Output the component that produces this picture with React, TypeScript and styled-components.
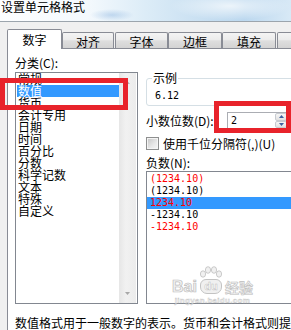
import React from "react";
import styled, { createGlobalStyle } from "styled-components";

const CJK = `"Noto Sans CJK SC", "Noto Sans", sans-serif`;
const MONO = `"DejaVu Sans Mono", "Liberation Mono", monospace`;

const Global = createGlobalStyle`
  html, body { margin: 0; padding: 0; background: #f0f0f0; overflow: hidden; }
  #root { width: 291px; height: 330px; }
`;

const Window = styled.div`
  position: relative;
  width: 291px;
  height: 330px;
  overflow: hidden;
  background: #f0f0f0;
  font-family: ${CJK};
  font-size: 12px;
  line-height: 12px;
  color: #000;
`;

const TitleBar = styled.div`
  height: 21px;
  border-bottom: 1px solid #9ca5ad;
  padding-left: 1px;
  line-height: 14px;
  background:
    radial-gradient(ellipse 22px 6px at 112px 15px, rgba(110, 160, 215, 0.35), transparent),
    radial-gradient(ellipse 60px 14px at 230px 6px, rgba(255, 255, 255, 0.7), transparent),
    linear-gradient(to right, #fdfeff 0%, #f4f9fd 30%, #dcecf7 50%, #c6def1 72%, #bcd8ef 84%, #d8e9f6 100%);
`;

const Body = styled.div`
  padding-top: 7px;
`;

const TabRow = styled.div`
  display: flex;
  align-items: flex-end;
  height: 19px;
  padding-left: 7px;
`;

const Tab = styled.div<{ $active?: boolean; $w: number; $gap: number }>`
  flex: none;
  position: relative;
  z-index: ${(p) => (p.$active ? 1 : 0)};
  box-sizing: border-box;
  width: ${(p) => p.$w}px;
  height: ${(p) => (p.$active ? 20 : 16)}px;
  margin-left: ${(p) => p.$gap}px;
  margin-bottom: ${(p) => (p.$active ? -1 : 0)}px;
  padding-top: ${(p) => (p.$active ? 0 : 2)}px;
  border: 1px solid #898c95;
  border-bottom: none;
  border-radius: 2px 2px 0 0;
  background: ${(p) =>
    p.$active
      ? "#ffffff"
      : "linear-gradient(#f4f4f4, #ececec 45%, #dedede 52%, #d3d3d3)"};
  display: flex;
  align-items: center;
  justify-content: center;
  white-space: nowrap;
`;

const Panel = styled.div`
  box-sizing: border-box;
  margin-left: 7px;
  width: 320px;
  height: 300px;
  border: 1px solid #898c95;
  background: #ffffff;
  padding: 8px 0 0 7px;
`;

const Columns = styled.div`
  display: flex;
  align-items: flex-start;
`;

const LeftCol = styled.div`
  width: 123px;
  display: flex;
  flex-direction: column;
`;

const RightCol = styled.div`
  margin-left: 8px;
  width: 170px;
  display: flex;
  flex-direction: column;
`;

const Label = styled.div`
  height: 12px;
  line-height: 12px;
  white-space: nowrap;
`;

const CatList = styled.div`
  box-sizing: border-box;
  margin-top: 3px;
  height: 232px;
  border: 1px solid #828790;
  display: flex;
  padding: 0 1px;
  background: #fff;
`;

const CatItems = styled.div`
  flex: 1;
  display: flex;
  flex-direction: column;
`;

const CatItem = styled.div<{ $sel?: boolean }>`
  height: 12px;
  line-height: 12px;
  padding-left: 1px;
  white-space: nowrap;
  background: ${(p) => (p.$sel ? "#3399ff" : "transparent")};
  color: ${(p) => (p.$sel ? "#ffffff" : "#000000")};
`;

const ScrollBar = styled.div`
  width: 17px;
  display: flex;
  flex-direction: column;
  justify-content: space-between;
  align-items: center;
  padding: 8px 0 8px;
  background: linear-gradient(to right, #e6e6e6, #f1f1f1 40%, #ececec);
`;

const Groupbox = styled.div`
  box-sizing: border-box;
  margin-top: 21px;
  height: 28px;
  border: 1px solid #d5dfe5;
  border-radius: 3px;
`;

const Legend = styled.div`
  margin: -7px 0 0 5px;
  padding: 0 1px;
  width: fit-content;
  line-height: 12px;
  background: #fff;
`;

const SampleValue = styled.div`
  margin: 7px 0 0 8px;
  font-family: ${MONO};
  font-size: 10px;
  line-height: 10px;
`;

const DecRow = styled.div`
  margin-top: 6px;
  height: 17px;
  display: flex;
  align-items: center;
`;

const DecLabel = styled.div`
  width: 81px;
  flex: none;
  white-space: nowrap;
`;

const SpinBox = styled.div`
  box-sizing: border-box;
  width: 62px;
  height: 17px;
  border: 1px solid #abadb3;
  background: #fff;
  display: flex;
  align-items: center;
  padding-left: 3px;
  font-family: ${MONO};
  font-size: 10px;
`;

const SpinButtons = styled.div`
  margin-left: auto;
  margin-right: 1px;
  width: 12px;
  height: 15px;
  display: flex;
  flex-direction: column;
`;

const SpinBtn = styled.div`
  flex: 1;
  box-sizing: border-box;
  border: 1px solid #c7cbd1;
  border-radius: 2px;
  background: linear-gradient(#f6f6f6, #e2e2e2);
  display: flex;
  align-items: center;
  justify-content: center;
`;

const CheckRow = styled.div`
  margin-top: 8px;
  height: 13px;
  display: flex;
  align-items: center;
`;

const CheckBox = styled.div`
  box-sizing: border-box;
  flex: none;
  width: 13px;
  height: 13px;
  border: 1px solid #8e8f8f;
  padding: 1px;
  background: #f4f4f4;
  &::after {
    content: "";
    display: block;
    width: 100%;
    height: 100%;
    background: linear-gradient(135deg, #c9c9c9, #e7e7e7 60%, #f3f3f3);
  }
`;

const CheckText = styled.div`
  margin-left: 4px;
  white-space: nowrap;
`;

const NegLabel = styled(Label)`
  margin-top: 7px;
`;

const NegList = styled.div`
  box-sizing: border-box;
  margin-top: 2px;
  height: 133px;
  border: 1px solid #828790;
  padding-top: 1px;
  background: #fff;
`;

const NegItem = styled.div<{ $sel?: boolean; $red?: boolean }>`
  height: 12px;
  line-height: 12px;
  padding-left: 3px;
  font-family: ${MONO};
  font-size: 10px;
  white-space: nowrap;
  color: ${(p) => (p.$red ? "#ff0000" : "#000000")};
  background: ${(p) => (p.$sel ? "#3399ff" : "transparent")};
`;

const Description = styled.div`
  margin-top: 13px;
  line-height: 12px;
  white-space: nowrap;
`;

const Annotation = styled.div<{ $l: number; $t: number; $w: number; $h: number }>`
  position: absolute;
  box-sizing: border-box;
  left: ${(p) => p.$l}px;
  top: ${(p) => p.$t}px;
  width: ${(p) => p.$w}px;
  height: ${(p) => p.$h}px;
  border: 5px solid #e8232b;
`;

const Watermark = styled.div`
  position: absolute;
  left: 172px;
  top: 266px;
  display: flex;
  flex-direction: column;
  align-items: center;
  pointer-events: none;
  opacity: 0.75;
`;

const WmRow = styled.div`
  display: flex;
  align-items: flex-end;
`;

const WmBai = styled.span`
  font-family: "Liberation Sans", sans-serif;
  font-weight: bold;
  font-size: 16px;
  line-height: 14px;
  color: #eeeeee;
  -webkit-text-stroke: 0.7px #a9a9a9;
`;

const WmDu = styled.div`
  display: flex;
  flex-direction: column;
  align-items: center;
  margin: 0 2px;
`;

const WmDuText = styled.span`
  font-family: "Liberation Sans", sans-serif;
  font-weight: bold;
  font-size: 11px;
  line-height: 11px;
  padding: 1px 3px;
  border-radius: 6px 6px 7px 7px;
  border: 1px solid #b0b0b0;
  background: #ececec;
  color: #ffffff;
  -webkit-text-stroke: 0.5px #a9a9a9;
`;

const WmJy = styled.span`
  font-family: ${CJK};
  font-weight: bold;
  font-size: 14px;
  line-height: 14px;
  color: #eeeeee;
  -webkit-text-stroke: 0.6px #a9a9a9;
`;

const WmUrl = styled.span`
  margin-top: 3px;
  font-family: "Liberation Sans", sans-serif;
  font-weight: bold;
  font-size: 8px;
  line-height: 8px;
  color: #eeeeee;
  -webkit-text-stroke: 0.4px #b5b5b5;
  letter-spacing: 0.3px;
`;

const tabs = [
  { label: "数字", w: 55, gap: 0, active: true },
  { label: "对齐", w: 52, gap: 0 },
  { label: "字体", w: 53, gap: 1 },
  { label: "边框", w: 54, gap: 0 },
  { label: "填充", w: 54, gap: 0 },
  { label: "保护", w: 54, gap: 1 },
];

const categories = [
  "常规",
  "数值",
  "货币",
  "会计专用",
  "日期",
  "时间",
  "百分比",
  "分数",
  "科学记数",
  "文本",
  "特殊",
  "自定义",
];

const negatives = [
  { text: "(1234.10)", red: true },
  { text: "(1234.10)", red: false },
  { text: "1234.10", red: true, sel: true },
  { text: "-1234.10", red: false },
  { text: "-1234.10", red: true },
];

const Arrow = ({ up, color }: { up?: boolean; color: string }) => (
  <svg width="5" height="3" viewBox="0 0 5 3">
    <path d={up ? "M0 3 L2.5 0 L5 3 Z" : "M0 0 L5 0 L2.5 3 Z"} fill={color} />
  </svg>
);

const Paw = () => (
  <svg width="24" height="13" viewBox="0 0 24 13">
    <g fill="#ececec" stroke="#a9a9a9" strokeWidth="0.8">
      <ellipse cx="4" cy="8" rx="2.6" ry="3.2" />
      <ellipse cx="9" cy="4" rx="2.6" ry="3.3" />
      <ellipse cx="15" cy="4" rx="2.6" ry="3.3" />
      <ellipse cx="20" cy="8" rx="2.6" ry="3.2" />
    </g>
  </svg>
);

export default function App() {
  return (
    <Window>
      <Global />
      <TitleBar>设置单元格格式</TitleBar>
      <Body>
        <TabRow>
          {tabs.map((t) => (
            <Tab key={t.label} $active={t.active} $w={t.w} $gap={t.gap}>
              {t.label}
            </Tab>
          ))}
        </TabRow>
        <Panel>
          <Columns>
            <LeftCol>
              <Label>分类(C):</Label>
              <CatList>
                <CatItems>
                  {categories.map((c) => (
                    <CatItem key={c} $sel={c === "数值"}>
                      {c}
                    </CatItem>
                  ))}
                </CatItems>
                <ScrollBar>
                  <Arrow up color="#b4b4b4" />
                  <Arrow color="#a8a8a8" />
                </ScrollBar>
              </CatList>
            </LeftCol>
            <RightCol>
              <Groupbox>
                <Legend>示例</Legend>
                <SampleValue>6.12</SampleValue>
              </Groupbox>
              <DecRow>
                <DecLabel>小数位数(D):</DecLabel>
                <SpinBox>
                  2
                  <SpinButtons>
                    <SpinBtn>
                      <Arrow up color="#3d5f9e" />
                    </SpinBtn>
                    <SpinBtn>
                      <Arrow color="#3d5f9e" />
                    </SpinBtn>
                  </SpinButtons>
                </SpinBox>
              </DecRow>
              <CheckRow>
                <CheckBox />
                <CheckText>使用千位分隔符(,)(U)</CheckText>
              </CheckRow>
              <NegLabel>负数(N):</NegLabel>
              <NegList>
                {negatives.map((n, i) => (
                  <NegItem key={i} $red={n.red} $sel={n.sel}>
                    {n.text}
                  </NegItem>
                ))}
              </NegList>
            </RightCol>
          </Columns>
          <Description>
            数值格式用于一般数字的表示。货币和会计格式则提供货币值计算的专用格式。
          </Description>
        </Panel>
      </Body>
      <Annotation $l={0} $t={78} $w={128} $h={32} />
      <Annotation $l={214} $t={101} $w={77} $h={32} />
      <Watermark>
        <WmRow>
          <WmBai>Bai</WmBai>
          <WmDu>
            <Paw />
            <WmDuText>du</WmDuText>
          </WmDu>
          <WmJy>经验</WmJy>
        </WmRow>
        <WmUrl>jingyan.baidu.com</WmUrl>
      </Watermark>
    </Window>
  );
}
